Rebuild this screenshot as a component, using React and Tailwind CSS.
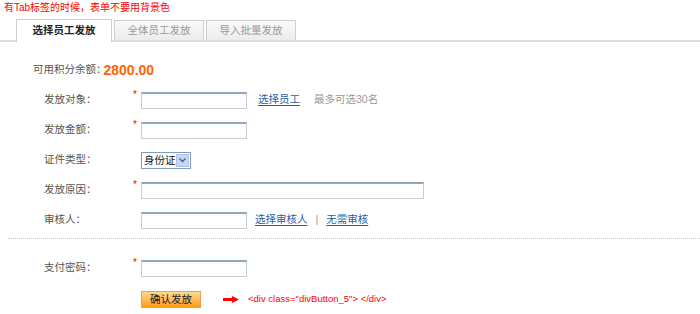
const font = { fontFamily: '"Liberation Sans", "Noto Sans CJK SC", sans-serif' }

const Field = ({ label, required, children }) => (
  <div className="flex items-center h-[30px]">
    <div className="w-[133px] pl-[44px] text-[10.5px] text-[#555] whitespace-nowrap">{label}</div>
    <div className="w-[8px] self-start pt-[5px] text-[10px] leading-[10px] text-[#ff0000]">{required ? '*' : ''}</div>
    <div className="flex items-center">{children}</div>
  </div>
)

const TextInput = ({ w = 'w-[106px]' }) => (
  <div className={`${w} h-[17px] border border-[#c5ced8] border-t-[#94a6ba] border-t-2 bg-white`} />
)

const Tab = ({ active, children }) => (
  <div
    className={
      active
        ? 'w-[96px] h-[23px] mb-[-2px] border border-b-0 border-[#cfcfcf] bg-white flex items-center justify-center text-[10.5px] font-bold text-[#222]'
        : 'w-[90px] h-[20px] ml-[2px] border border-b-0 border-[#cfcfcf] bg-gradient-to-b from-[#fafafa] to-[#ececec] flex items-center justify-center text-[10.5px] text-[#999]'
    }
  >
    {children}
  </div>
)

export default function App() {
  return (
    <div className="w-[700px] h-[314px] bg-white overflow-hidden" style={font}>
      <div className="pl-[4px] pt-[1px] text-[10px] leading-[13px] text-[#ff0000]">有Tab标签的时候，表单不要用背景色</div>

      <div className="mt-[3px] h-[25px] flex items-end pl-[16px] border-b-2 border-[#d8dcdc]">
        <Tab active>选择员工发放</Tab>
        <Tab>全体员工发放</Tab>
        <Tab>导入批量发放</Tab>
      </div>

      <div className="mt-[18px] pl-[33px] flex items-center h-[20px]">
        <span className="text-[10.5px] text-[#555]">可用积分余额：</span>
        <span className="-ml-[3px] text-[14px] font-bold text-[#ff6600]">2800.00</span>
      </div>

      <div className="mt-[5px]">
        <Field label="发放对象：" required>
          <TextInput />
          <a className="ml-[11px] text-[10.5px] text-[#1f5fa8] underline underline-offset-2">选择员工</a>
          <span className="ml-[14px] text-[10.5px] text-[#999]">最多可选30名</span>
        </Field>
        <Field label="发放金额：" required>
          <TextInput />
        </Field>
        <Field label="证件类型：">
          <div className="h-[17px] w-[50px] border border-[#7f9db9] bg-white flex items-center">
            <span className="pl-[2px] text-[10.5px] leading-[12px] text-[#111] flex-1 whitespace-nowrap">身份证</span>
            <span className="w-[14px] h-[13px] mr-[1px] bg-[#c6d6f4] border border-[#b0c4e8] flex items-center justify-center">
              <svg width="7" height="5" viewBox="0 0 7 5"><path d="M0.5 0.5 L3.5 3.5 L6.5 0.5" fill="none" stroke="#4d6185" strokeWidth="1.4" /></svg>
            </span>
          </div>
        </Field>
        <Field label="发放原因：" required>
          <TextInput w="w-[283px]" />
        </Field>
        <Field label="审核人：">
          <TextInput />
          <a className="ml-[8px] text-[10.5px] text-[#1f5fa8] underline underline-offset-2">选择审核人</a>
          <span className="mx-[8px] text-[10.5px] text-[#999]">|</span>
          <a className="text-[10.5px] text-[#1f5fa8] underline underline-offset-2">无需审核</a>
        </Field>
      </div>

      <div className="mt-[3px] ml-[8px] border-t border-dotted border-[#c8c8c8]" />

      <div className="mt-[14px]">
        <Field label="支付密码：" required>
          <TextInput />
        </Field>
      </div>

      <div className="mt-[1px] flex items-center h-[30px]">
        <div className="w-[141px]" />
        <button className="w-[60px] h-[17px] border border-[#f0a050] bg-gradient-to-b from-[#ffd98a] to-[#ff9a00] text-[10.5px] leading-[12px] text-[#222]">确认发放</button>
        <svg className="ml-[22px]" width="16" height="7" viewBox="0 0 16 7">
          <rect x="0" y="2" width="10" height="3" fill="#ff0000" />
          <path d="M9 0 L16 3.5 L9 7 Z" fill="#ff0000" />
        </svg>
        <span className="ml-[9px] text-[9.5px] text-[#ff0000]">{'<div class="divButton_5"> </div>'}</span>
      </div>
    </div>
  )
}
